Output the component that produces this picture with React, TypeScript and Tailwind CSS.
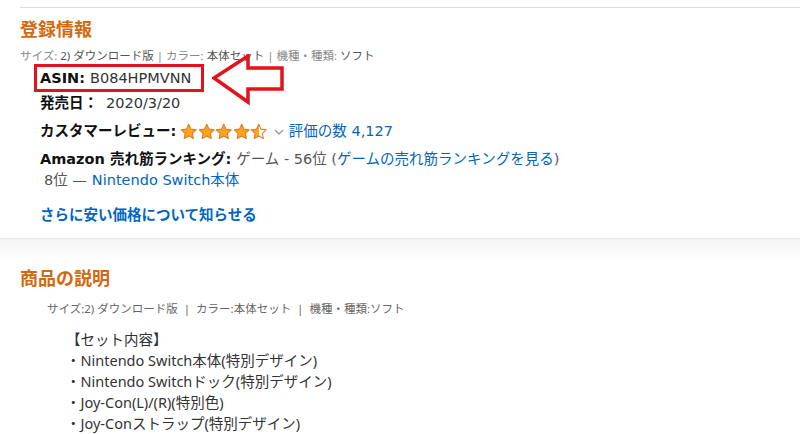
import React from "react";

const font = { fontFamily: '"DejaVu Sans", "Noto Sans CJK JP", sans-serif' };
const listFont = { fontFamily: '"Noto Sans", "Noto Sans CJK JP", sans-serif' };

function Star({ fill }: { fill: "full" | "half" }) {
  return (
    <svg width="17.5" height="17.5" viewBox="0 0 24 24" className="shrink-0">
      <defs>
        <linearGradient id="half" x1="0" x2="1" y1="0" y2="0">
          <stop offset="50%" stopColor="#ffa41c" />
          <stop offset="50%" stopColor="#ffffff" />
        </linearGradient>
      </defs>
      <path
        d="M12 1.8l3.1 6.6 7.1.9-5.2 4.9 1.3 7.1L12 17.8l-6.3 3.5L7 14.2 1.8 9.3l7.1-.9z"
        fill={fill === "full" ? "#ffa41c" : "url(#half)"}
        stroke="#de7921"
        strokeWidth="1.4"
        strokeLinejoin="round"
      />
    </svg>
  );
}

export default function App() {
  return (
    <div className="relative w-[800px] h-[434px] overflow-hidden bg-white text-[#111]" style={font}>
      {/* 登録情報 */}
      <div className="ml-5 mt-[7px] border-t border-[#dddddd] pt-[10px]">
        <h2 className="text-[18px] font-bold leading-[22px] text-[#d2690e]" style={listFont}>
          登録情報
        </h2>
        <p className="mt-[8px] text-[11.5px] leading-[16px] text-[#888]" style={listFont}>
          サイズ: <span className="text-[#555]">2) ダウンロード版</span> | カラー:{" "}
          <span className="text-[#555]">本体セット</span> | 機種・種類: <span className="text-[#555]">ソフト</span>
        </p>
        <div className="ml-[14px] text-[14.5px]">
          <div className="flex h-[28px] w-[170px] items-center border-[3px] border-[#e3121b] px-[3px] leading-[20px]">
            <span className="font-bold">ASIN:</span>
            <span className="ml-[5px] text-[#333]">B084HPMVNN</span>
          </div>
          <div className="mt-[2px] flex h-[20px] items-center px-[6px]">
            <span className="font-bold">発売日：</span>
            <span className="ml-2 text-[#333]">2020/3/20</span>
          </div>
          <div className="mt-[8px] flex h-[20px] items-center px-[6px]">
            <span className="font-bold">カスタマーレビュー:</span>
            <span className="ml-[4px] flex items-center">
              <Star fill="full" />
              <Star fill="full" />
              <Star fill="full" />
              <Star fill="full" />
              <Star fill="half" />
            </span>
            <svg width="10" height="8" viewBox="0 0 10 8" className="ml-[6px]">
              <path d="M1 2l4 4 4-4" fill="none" stroke="#999" strokeWidth="1.3" />
            </svg>
            <span className="ml-[5px] text-[#0066c0]">評価の数 4,127</span>
          </div>
          <div className="mt-[8px] flex h-[20px] items-center px-[6px]">
            <span className="font-bold">Amazon 売れ筋ランキング:</span>
            <span className="ml-[5px] text-[#555]">ゲーム - 56位 (</span>
            <span className="text-[#0066c0]">ゲームの売れ筋ランキングを見る</span>
            <span className="text-[#555]">)</span>
          </div>
          <div className="mt-[1px] flex h-[20px] items-center px-[10px]">
            <span className="text-[#555]">8位 —</span>
            <span className="ml-[5px] text-[#0066c0]">Nintendo Switch本体</span>
          </div>
          <div className="mt-[15px] flex h-[20px] items-center px-[6px]">
            <span className="font-bold text-[#0066c0]">さらに安い価格について知らせる</span>
          </div>
        </div>
      </div>

      {/* divider */}
      <div className="mt-[12px] h-[24px] border-t border-[#e3e3e3] bg-gradient-to-b from-[#f5f5f5] to-white" />

      {/* 商品の説明 */}
      <div className="ml-5 mt-[5px]" style={listFont}>
        <h2 className="text-[18px] font-bold leading-[22px] text-[#d2690e]">商品の説明</h2>
        <p className="ml-[27px] mt-[12px] text-[11.5px] leading-[16px] text-[#666]">
          サイズ:2) ダウンロード版 &nbsp;|&nbsp; カラー:本体セット &nbsp;|&nbsp; 機種・種類:ソフト
        </p>
        <ul className="ml-[46px] mt-[12px] text-[14.5px] leading-[21px] text-[#333]">
          <li>【セット内容】</li>
          <li>・Nintendo Switch本体(特別デザイン)</li>
          <li>・Nintendo Switchドック(特別デザイン)</li>
          <li>・Joy-Con(L)/(R)(特別色)</li>
          <li>・Joy-Conストラップ(特別デザイン)</li>
        </ul>
      </div>

      {/* annotation arrow */}
      <svg width="74" height="52" viewBox="0 0 74 52" className="absolute left-[212px] top-[54px]">
        <path
          d="M2 24 L36 2 L36 14 L70 14 L70 35 L36 35 L36 48 Z"
          fill="none"
          stroke="#e3121b"
          strokeWidth="3.5"
          strokeLinejoin="miter"
        />
      </svg>
    </div>
  );
}
